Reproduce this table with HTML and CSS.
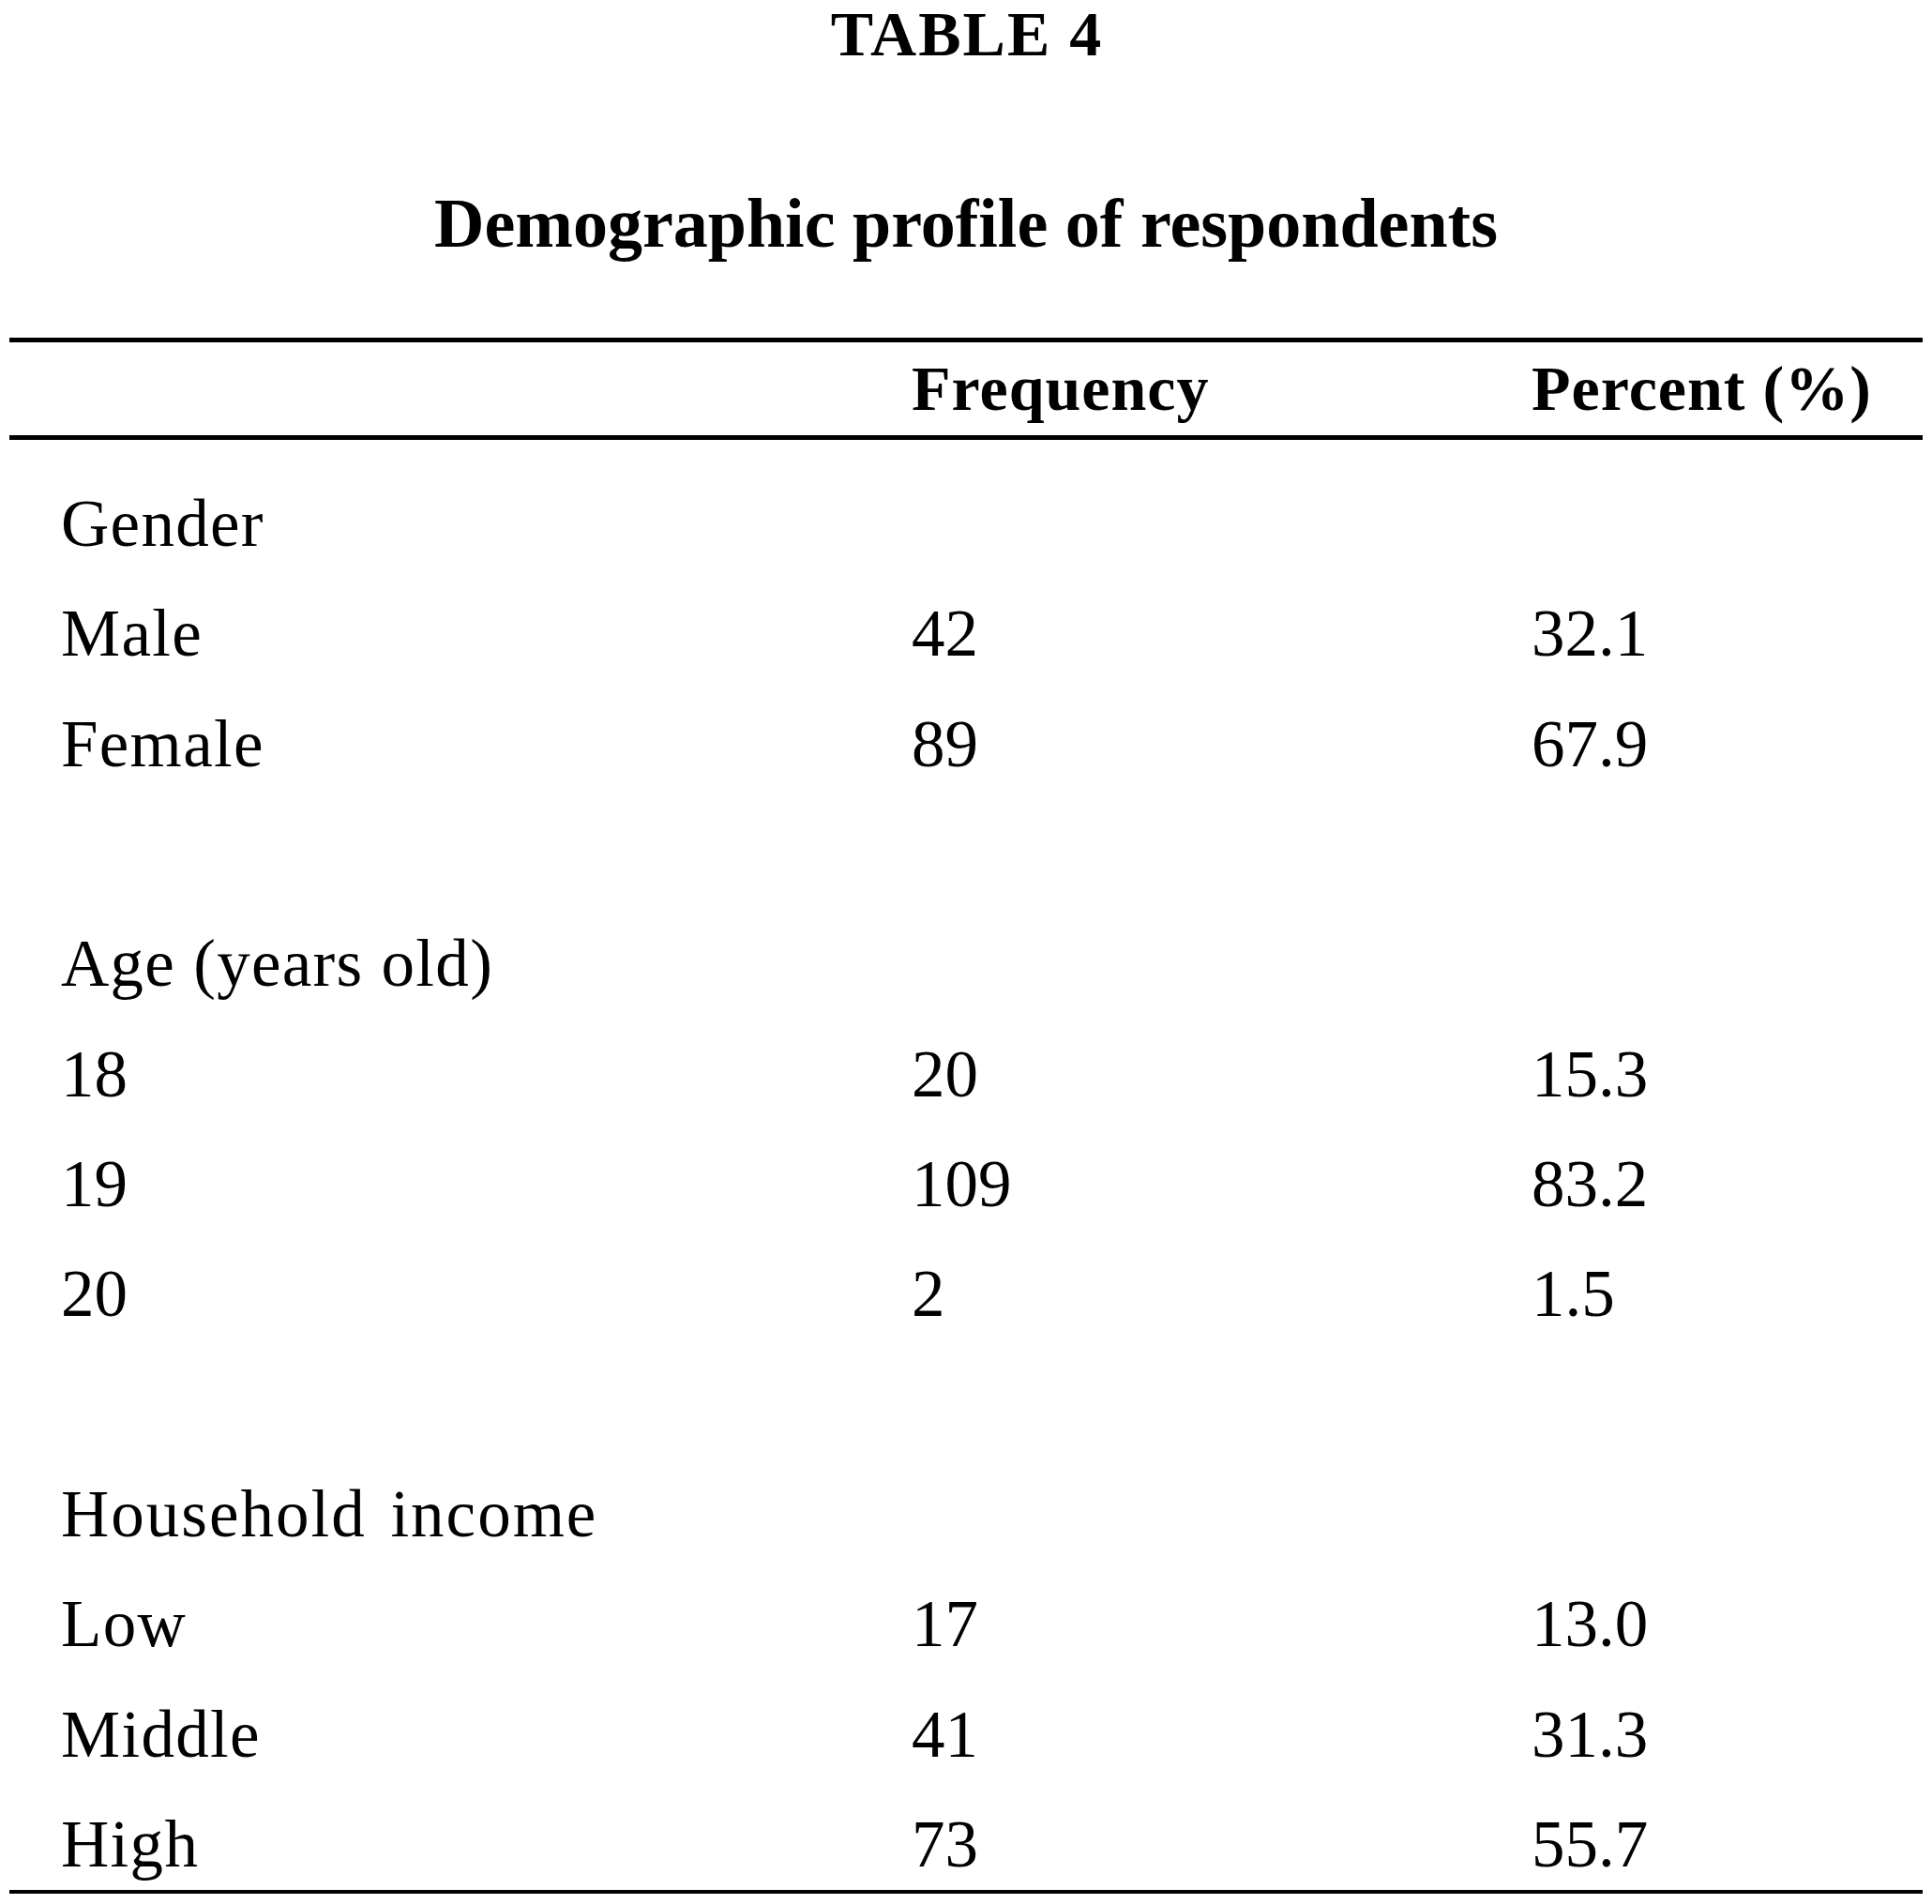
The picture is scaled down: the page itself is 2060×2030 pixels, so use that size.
FILE: index.html
```html
<!DOCTYPE html>
<html lang="en">
<head>
<meta charset="utf-8">
<title>Table 4 – Demographic profile of respondents</title>
<link rel="stylesheet" href="styles.css">
</head>
<body>
<div class="page">
  <div class="table-label">TABLE 4</div>
  <div class="table-caption">Demographic profile of respondents</div>
  <div class="data-table">
    <div class="head-row">
      <div class="cell first"></div>
      <div class="cell">Frequency</div>
      <div class="cell">Percent (%)</div>
    </div>
    <div class="body-rows">
      <div class="cell first">Gender</div><div class="cell num"></div><div class="cell num"></div>
      <div class="cell first">Male</div><div class="cell num">42</div><div class="cell num">32.1</div>
      <div class="cell first">Female</div><div class="cell num">89</div><div class="cell num">67.9</div>
      <div class="cell first"></div><div class="cell num"></div><div class="cell num"></div>
      <div class="cell first">Age (years old)</div><div class="cell num"></div><div class="cell num"></div>
      <div class="cell first num">18</div><div class="cell num">20</div><div class="cell num">15.3</div>
      <div class="cell first num">19</div><div class="cell num">109</div><div class="cell num">83.2</div>
      <div class="cell first num">20</div><div class="cell num">2</div><div class="cell num">1.5</div>
      <div class="cell first"></div><div class="cell num"></div><div class="cell num"></div>
      <div class="cell first wide">Household income</div><div class="cell num"></div><div class="cell num"></div>
      <div class="cell first">Low</div><div class="cell num">17</div><div class="cell num">13.0</div>
      <div class="cell first">Middle</div><div class="cell num">41</div><div class="cell num">31.3</div>
      <div class="cell first">High</div><div class="cell num">73</div><div class="cell num">55.7</div>
    </div>
  </div>
</div>
</body>
</html>
```

FILE: styles.css
```css
html, body {
  margin: 0;
  padding: 0;
  background: #ffffff;
}

body {
  font-family: "Liberation Serif", "Times New Roman", serif;
  color: #000000;
}

.page {
  width: 2060px;
}

.table-label {
  text-align: center;
  font-weight: bold;
  font-size: 68px;
  line-height: 68px;
  height: 68px;
  padding-top: 2px;
  letter-spacing: 2px;
  padding-left: 2px;
}

.table-caption {
  margin-top: 131px;
  text-align: center;
  font-weight: bold;
  font-size: 74px;
  line-height: 74px;
  height: 74px;
}

.data-table {
  margin: 85px 10px 0 10px;
  border-top: 5px solid #000000;
  border-bottom: 4px solid #000000;
}

.head-row {
  display: grid;
  grid-template-columns: 962px 661px 1fr;
  height: 99px;
  line-height: 99px;
  font-size: 68px;
  font-weight: bold;
  letter-spacing: 1px;
  border-bottom: 5px solid #000000;
}

.body-rows {
  display: grid;
  grid-template-columns: 962px 661px 1fr;
  grid-auto-rows: 98px;
  row-gap: 19.33px;
  padding-top: 40px;
  font-size: 71px;
  line-height: 98px;
  letter-spacing: 1.3px;
}

.cell {
  white-space: nowrap;
}

.cell.first {
  padding-left: 55px;
}

.cell.num {
  letter-spacing: 0;
}

.cell.wide {
  letter-spacing: 2px;
  word-spacing: 6px;
}
```
